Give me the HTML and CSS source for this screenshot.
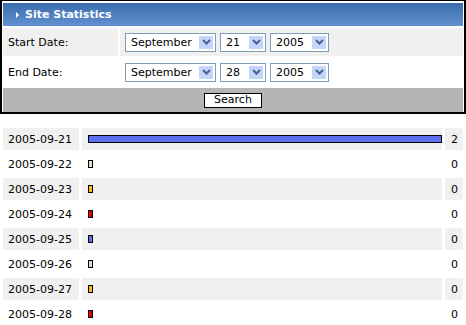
FILE: index.html
```html
<!DOCTYPE html>
<html lang="en">
<head>
    <meta charset="UTF-8">
    <title>Site Statistics</title>
    <link rel="stylesheet" href="styles.css">
</head>
<body>
    <div class="panel">
        <div class="panel-title"><span class="caret"></span>Site Statistics</div>

        <div class="label alt">Start Date:</div>
        <div class="fields alt">
            <div class="select month"><span>September</span><span class="drop"><svg width="9" height="6" viewBox="0 0 9 6"><path d="M1 1 L4.5 4.5 L8 1" fill="none" stroke="#4a5f8c" stroke-width="2"/></svg></span></div>
            <div class="select day"><span>21</span><span class="drop"><svg width="9" height="6" viewBox="0 0 9 6"><path d="M1 1 L4.5 4.5 L8 1" fill="none" stroke="#4a5f8c" stroke-width="2"/></svg></span></div>
            <div class="select year"><span>2005</span><span class="drop"><svg width="9" height="6" viewBox="0 0 9 6"><path d="M1 1 L4.5 4.5 L8 1" fill="none" stroke="#4a5f8c" stroke-width="2"/></svg></span></div>
        </div>

        <div class="label">End Date:</div>
        <div class="fields">
            <div class="select month"><span>September</span><span class="drop"><svg width="9" height="6" viewBox="0 0 9 6"><path d="M1 1 L4.5 4.5 L8 1" fill="none" stroke="#4a5f8c" stroke-width="2"/></svg></span></div>
            <div class="select day"><span>28</span><span class="drop"><svg width="9" height="6" viewBox="0 0 9 6"><path d="M1 1 L4.5 4.5 L8 1" fill="none" stroke="#4a5f8c" stroke-width="2"/></svg></span></div>
            <div class="select year"><span>2005</span><span class="drop"><svg width="9" height="6" viewBox="0 0 9 6"><path d="M1 1 L4.5 4.5 L8 1" fill="none" stroke="#4a5f8c" stroke-width="2"/></svg></span></div>
        </div>

        <div class="search-row"><button type="button">Search</button></div>
    </div>

    <table class="stats">
        <tr class="alt"><td class="date">2005-09-21</td><td class="graph"><div class="bar blue" style="width: 354px"></div></td><td class="count">2</td></tr>
        <tr><td class="date">2005-09-22</td><td class="graph"><div class="bar pale" style="width: 5px"></div></td><td class="count">0</td></tr>
        <tr class="alt"><td class="date">2005-09-23</td><td class="graph"><div class="bar orange" style="width: 5px"></div></td><td class="count">0</td></tr>
        <tr><td class="date">2005-09-24</td><td class="graph"><div class="bar red" style="width: 5px"></div></td><td class="count">0</td></tr>
        <tr class="alt"><td class="date">2005-09-25</td><td class="graph"><div class="bar blue" style="width: 5px"></div></td><td class="count">0</td></tr>
        <tr><td class="date">2005-09-26</td><td class="graph"><div class="bar pale" style="width: 5px"></div></td><td class="count">0</td></tr>
        <tr class="alt"><td class="date">2005-09-27</td><td class="graph"><div class="bar orange" style="width: 5px"></div></td><td class="count">0</td></tr>
        <tr><td class="date">2005-09-28</td><td class="graph"><div class="bar red" style="width: 5px"></div></td><td class="count">0</td></tr>
    </table>
</body>
</html>
```

FILE: styles.css
```css
body {
    margin: 0;
    font-family: "DejaVu Sans", Verdana, sans-serif;
    font-size: 11px;
    color: #000000;
    background: #ffffff;
}

.panel {
    box-sizing: border-box;
    width: 466px;
    border: 2px solid #000000;
    border-top-width: 1px;
    padding: 2px 1px 0 1px;
    display: grid;
    grid-template-columns: 115px 1fr;
    grid-template-rows: 23px 28px 28px 24px;
    gap: 2px;
}

.panel-title {
    grid-column: 1 / 3;
    display: flex;
    align-items: center;
    padding-left: 13px;
    background: linear-gradient(to bottom, #3a6cae, #6391cf);
    color: #ffffff;
    font-weight: bold;
}

.caret {
    width: 0;
    height: 0;
    border-left: 3px solid #ffffff;
    border-top: 3px solid transparent;
    border-bottom: 3px solid transparent;
    margin-right: 6px;
}

.label {
    display: flex;
    align-items: center;
    padding-left: 5px;
}

.fields {
    display: flex;
    align-items: center;
    gap: 4px;
    padding-left: 5px;
}

.alt {
    background: #f0f0f0;
}

.select {
    box-sizing: border-box;
    height: 19px;
    display: flex;
    align-items: center;
    justify-content: space-between;
    border: 1px solid #7f9db9;
    background: #ffffff;
    padding-left: 5px;
}

.select.month { width: 91px; }
.select.day { width: 46px; }
.select.year { width: 59px; }

.drop {
    width: 14px;
    height: 13px;
    margin-right: 2px;
    background: #c4d5fb;
    display: flex;
    align-items: center;
    justify-content: center;
}

.search-row {
    grid-column: 1 / 3;
    background: #b5b5b5;
    display: flex;
    align-items: center;
    justify-content: center;
}

.search-row button {
    width: 58px;
    height: 15px;
    padding: 0;
    border: 1px solid #000000;
    background: #ffffff;
    font-family: inherit;
    font-size: 11px;
    line-height: 12px;
}

.stats {
    width: 466px;
    margin-top: 11px;
    border-spacing: 3px;
}

.stats td {
    height: 22px;
    padding: 0;
}

.stats tr.alt td {
    background: #f0f0f0;
}

.stats .date {
    width: 71px;
    padding-left: 5px;
}

.stats .graph {
    padding-left: 6px;
}

.stats .count {
    width: 12px;
    padding-left: 6px;
}

.bar {
    box-sizing: border-box;
    height: 8px;
    border: 1px solid #000000;
}

.bar.blue { background: #5b6ff0; }
.bar.pale { background: #dbe3c6; }
.bar.orange { background: #fbb814; }
.bar.red { background: #ee0000; }
```
